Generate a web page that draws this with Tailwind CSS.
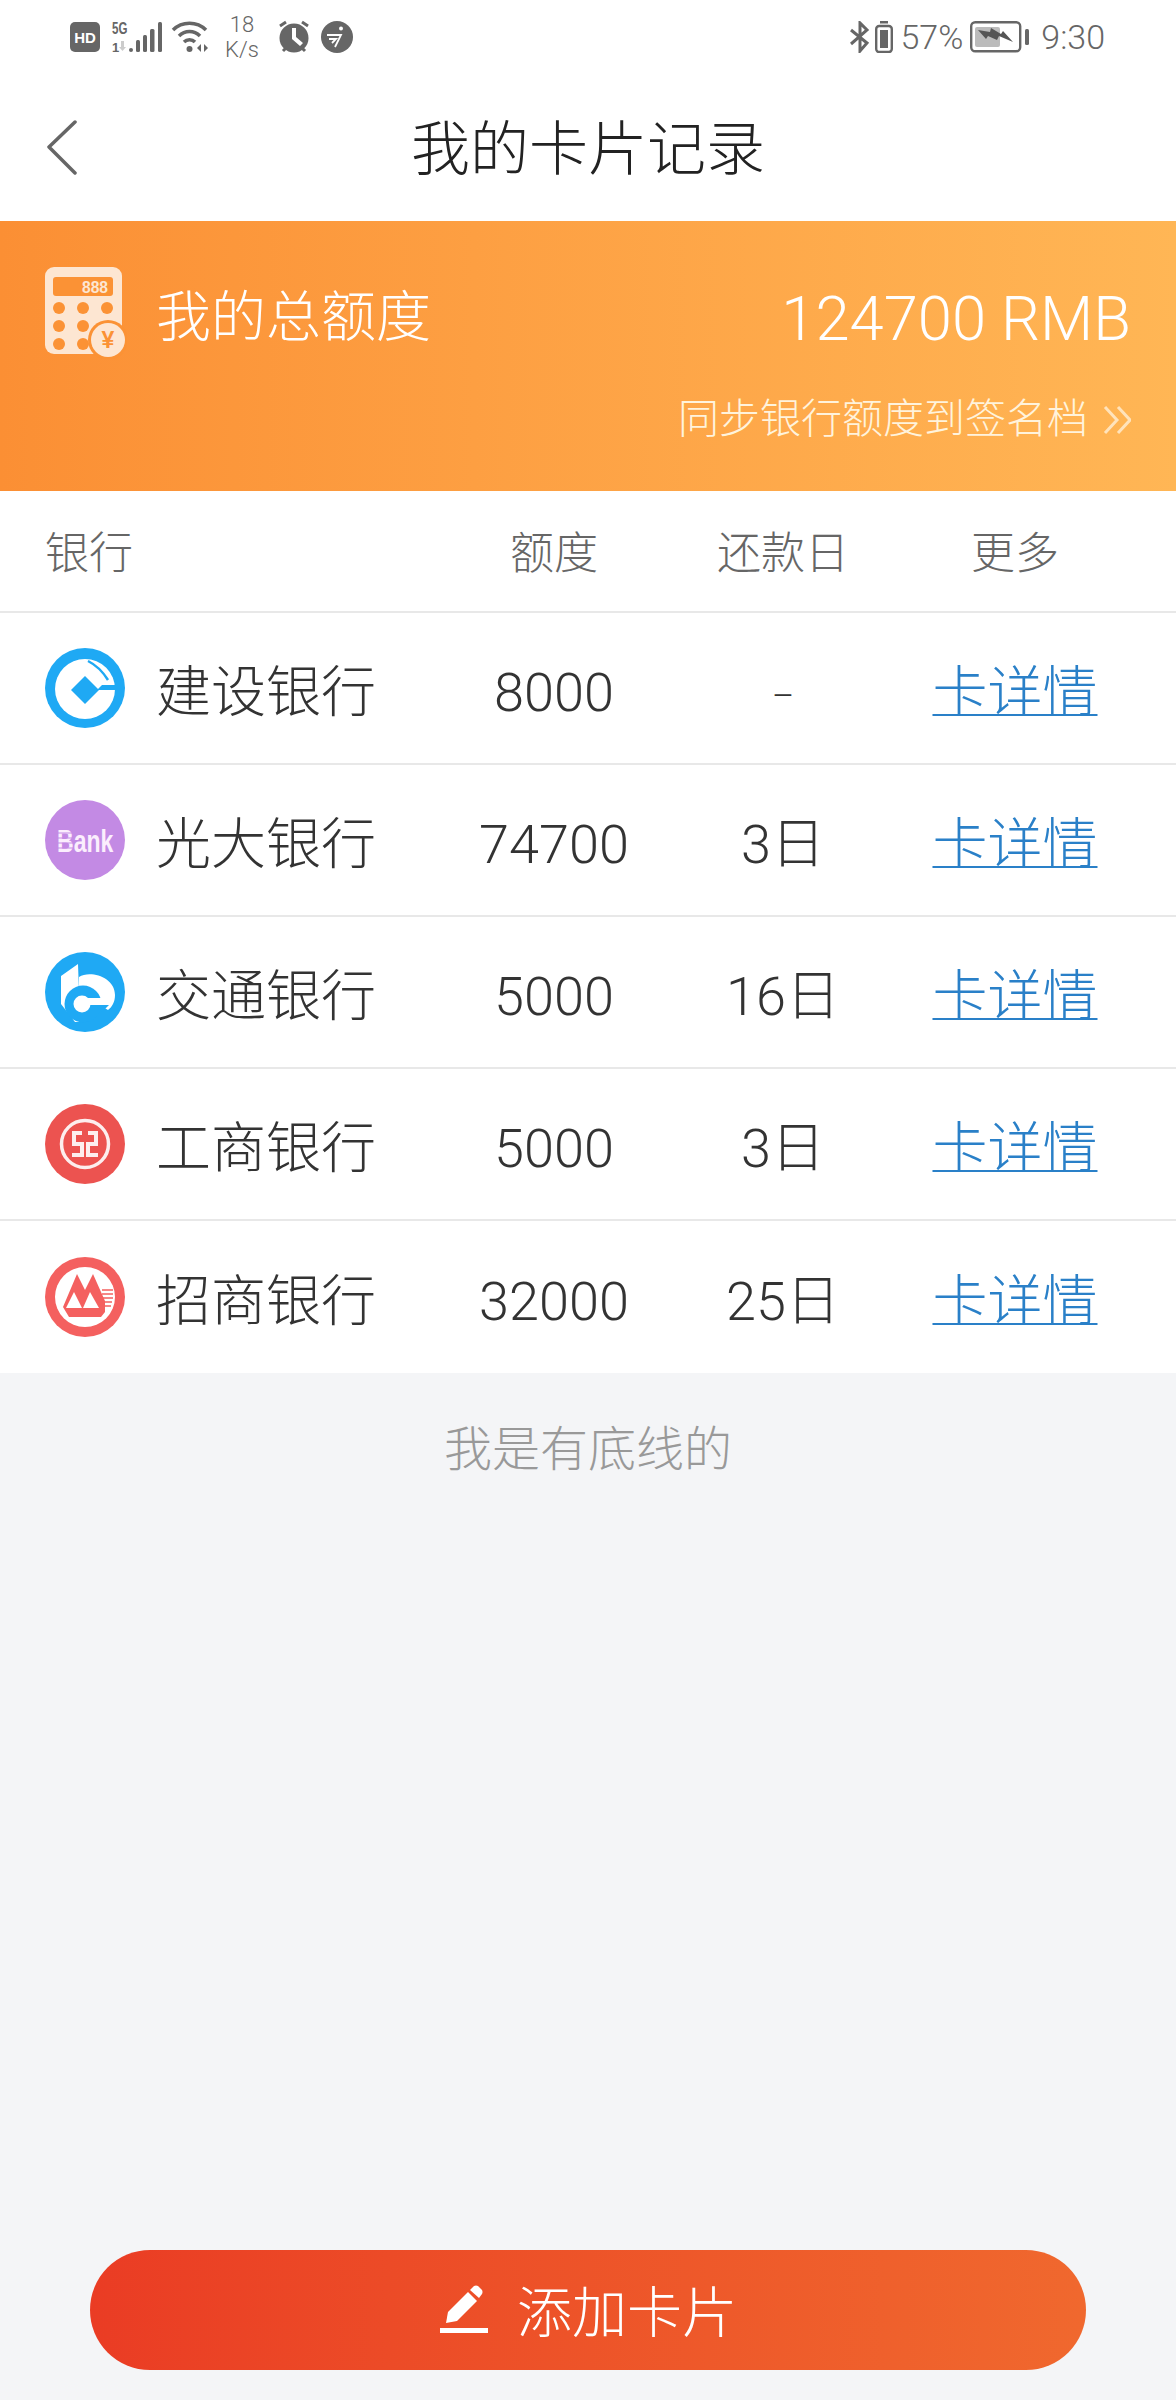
<!DOCTYPE html>
<html lang="zh-CN">
<head>
    <meta charset="UTF-8">
    <meta name="viewport" content="width=device-width, initial-scale=1.0">
    <title>我的卡片记录</title>
    <script src="https://cdn.jsdelivr.net/npm/@tailwindcss/browser@4"></script>
</head>
<body class="bg-[#f4f5f7] font-['Roboto','Noto_Sans_CJK_SC',sans-serif] font-light text-[#333333]">
    <div class="relative flex h-[2400px] w-[1176px] flex-col overflow-hidden">
        <!-- Status bar -->
        <div class="flex h-[74px] items-center justify-between bg-white pr-[71px] pl-[70px] text-[#666666]">
            <div class="flex items-center">
                <svg class="h-[30px] w-[30px]" viewBox="0 0 30 30"><rect width="30" height="30" rx="5" fill="#666"/><text x="15" y="21" text-anchor="middle" font-size="15" font-weight="700" fill="#fff" font-family="Liberation Sans">HD</text></svg>
                <svg class="ml-[11px] h-[38px] w-[51px]" viewBox="0 -3 51 38" fill="#666"><text transform="translate(1 13) scale(0.68 1)" font-size="17" font-weight="700" font-family="Liberation Sans">5G</text><text x="1" y="31" font-size="13" font-weight="700" font-family="Liberation Sans">1</text><path d="M10 20h3v6h2l-3.500 4-3.500-4h2z" fill="#ccc"/><rect x="18" y="27" width="4" height="4" rx="2"/><rect x="25" y="19" width="4" height="12" rx="1.500"/><rect x="32" y="14" width="4" height="17" rx="1.500"/><rect x="39" y="8" width="4.500" height="23" rx="1.500"/><rect x="47" y="1" width="4" height="30" rx="1.500"/></svg>
                <svg class="ml-[9px] h-[32px] w-[38px]" viewBox="0 0 38 32" fill="none" stroke="#666" stroke-width="3.500"><path d="M2 9C11 0 26 0 35 9"/><path d="M8 15c6-6 15-6 21 0"/><path d="M13 21c3-3 8-3 11 0"/><circle cx="18.500" cy="28" r="3" fill="#666" stroke="none"/><path d="M30 23l-4 4 4 4zM33 23l4 4-4 4z" fill="#666" stroke="none"/></svg>
                <div class="ml-[14px] w-[38px] text-center text-[22px] leading-[25px] font-light">18<br>K/s</div>
                <svg class="ml-[16px] h-[34px] w-[34px]" viewBox="0 0 34 34"><circle cx="17" cy="18" r="14.500" fill="#666"/><path d="M3 6l6-4M31 6l-6-4M6 31l3-3M28 31l-3-3" stroke="#666" stroke-width="3" fill="none"/><path d="M15 8v11l8 7 3-3-7-6V8z" fill="#fff"/></svg>
                <svg class="ml-[10px] h-[32px] w-[32px]" viewBox="0 0 32 32"><circle cx="16" cy="16" r="16" fill="#666"/><circle cx="20" cy="7.500" r="2" fill="#fff"/><path d="M6 14h14l-6 12M8 18h7l-4 4" fill="none" stroke="#fff" stroke-width="1.800"/></svg>
            </div>
            <div class="flex items-center">
                <svg class="h-[32px] w-[20px]" viewBox="0 0 20 32" fill="none" stroke="#666" stroke-width="3"><path d="M1 9l16 13-7 8V2l7 7L1 23"/></svg>
                <svg class="ml-[5px] h-[32px] w-[18px]" viewBox="0 0 18 32"><rect x="5" y="0" width="8" height="2.500" fill="#666"/><rect x="1.200" y="5" width="15.600" height="26" rx="3" fill="none" stroke="#666" stroke-width="2.400"/><rect x="5" y="9" width="8" height="18" fill="#666"/></svg>
                <span class="ml-[7px] text-[34px] leading-none font-light">57%</span>
                <svg class="ml-[7px] h-[32px] w-[60px]" viewBox="0 0 60 32"><rect x="1.200" y="1.200" width="49" height="29" rx="4" fill="none" stroke="#666" stroke-width="2.400"/><rect x="5" y="6" width="25" height="20" rx="2" fill="#bbb"/><path d="M8 9L20 11L21 7L31 13L33 10L43 21L29 15L27 19L18 15L16 18Z" fill="#555"/><rect x="55" y="8" width="4" height="16" rx="1.500" fill="#666"/></svg>
                <span class="ml-[11px] text-[34px] leading-none font-light">9:30</span>
            </div>
        </div>

        <!-- Nav -->
        <div class="relative flex h-[147px] items-center justify-center bg-white">
            <svg class="absolute top-[46px] left-[46px] h-[56px] w-[32px]" viewBox="0 0 32 56" fill="none" stroke="#666666" stroke-width="3.500" stroke-linecap="round" stroke-linejoin="round"><path d="M29 2L3 27l26 26"/></svg>
            <h1 class="pt-[3px] text-[59px] leading-none font-light text-[#222222]">我的卡片记录</h1>
        </div>

        <!-- Total banner -->
        <div class="flex h-[270px] flex-col bg-gradient-to-r from-[#fb8f34] to-[#ffb655] pt-[46px] pr-[45px] pl-[45px] text-white">
            <div class="flex items-start justify-between">
                <div class="flex items-start">
                    <svg class="h-[92px] w-[82px]" viewBox="0 0 82 92">
                        <rect x="0" y="0" width="77" height="87" rx="9" fill="#fde6d2"/>
                        <rect x="8" y="10" width="60" height="19" rx="3" fill="#fb9235"/>
                        <text x="37" y="26" font-size="17" font-weight="700" fill="#fde6d2" font-family="Liberation Sans" textLength="26" lengthAdjust="spacingAndGlyphs">888</text>
                        <g fill="#fb9235"><circle cx="14" cy="41" r="6"/><circle cx="38" cy="41" r="6"/><circle cx="62" cy="41" r="6"/><circle cx="14" cy="59" r="6"/><circle cx="38" cy="59" r="6"/><circle cx="14" cy="77" r="6"/><circle cx="38" cy="77" r="6"/></g>
                        <circle cx="63" cy="73" r="20" fill="#fb9235"/><circle cx="63" cy="73" r="17" fill="#fde6d2"/>
                        <text x="63" y="81" text-anchor="middle" font-size="23" font-weight="700" fill="#fb9235" font-family="Liberation Sans">¥</text>
                    </svg>
                    <span class="mt-[23px] ml-[29px] text-[55px] leading-none">我的总额度</span>
                </div>
                <span class="mt-[22px] text-[61.500px] leading-none">124700 RMB</span>
            </div>
            <div class="mt-[40px] flex items-center justify-end text-[#fff3dc]">
                <span class="text-[41px] leading-none">同步银行额度到签名档</span>
                <svg class="ml-[15px] h-[32px] w-[28px]" viewBox="0 0 28 32" fill="none" stroke="#ffe3bb" stroke-width="3"><path d="M2 3l12 13L2 29M15 3l12 13-12 13"/></svg>
            </div>
        </div>

        <!-- Table -->
        <div class="grid h-[122px] grid-cols-[394px_230px_228px_236px] items-center border-b-2 border-[#e8e8e8] bg-white pt-[5px] pl-[45px] text-[44px] text-[#666666]">
            <span>银行</span><span class="text-center">额度</span><span class="text-center">还款日</span><span class="text-center">更多</span>
        </div>

        <div class="grid h-[152px] grid-cols-[394px_230px_228px_236px] items-center border-b-2 border-[#e8e8e8] bg-white pl-[45px] text-[54px] [&_span]:pt-[8px]">
            <div class="flex items-center">
                <svg class="h-[80px] w-[80px]" viewBox="0 0 80 80"><circle cx="40" cy="40" r="40" fill="#1fa9f4"/><circle cx="40" cy="41" r="30" fill="#fff"/><path d="M40 28l14 14-14 14-14-14z" fill="#1fa9f4"/><path d="M52 42l5-5h16v5z" fill="#1fa9f4"/><path d="M43 13c8 4 15 11 20 19" fill="none" stroke="#1fa9f4" stroke-width="2.500"/></svg>
                <span class="ml-[31px] text-[55px]">建设银行</span>
            </div>
            <span class="text-center">8000</span><span class="translate-y-[3px] text-center text-[34px]">–</span>
            <a href="#" class="pt-[8px] text-center text-[55px] text-[#2a80c8] underline decoration-[2px] underline-offset-[3px]">卡详情</a>
        </div>
        <div class="grid h-[152px] grid-cols-[394px_230px_228px_236px] items-center border-b-2 border-[#e8e8e8] bg-white pl-[45px] text-[54px] [&_span]:pt-[8px]">
            <div class="flex items-center">
                <svg class="h-[80px] w-[80px]" viewBox="0 0 80 80"><circle cx="40" cy="40" r="40" fill="#c38ae4"/><text transform="translate(12 52) scale(0.72 1)" font-size="32" font-weight="700" fill="#fbeefd" font-family="Liberation Sans">Bank</text><path d="M12 33h16M12 38h16M12 43h16M12 48h16" stroke="#c38ae4" stroke-width="1"/></svg>
                <span class="ml-[31px] text-[55px]">光大银行</span>
            </div>
            <span class="text-center">74700</span><span class="text-center">3日</span>
            <a href="#" class="pt-[8px] text-center text-[55px] text-[#2a80c8] underline decoration-[2px] underline-offset-[3px]">卡详情</a>
        </div>
        <div class="grid h-[152px] grid-cols-[394px_230px_228px_236px] items-center border-b-2 border-[#e8e8e8] bg-white pl-[45px] text-[54px] [&_span]:pt-[8px]">
            <div class="flex items-center">
                <svg class="h-[80px] w-[80px]" viewBox="0 0 80 80"><circle cx="40" cy="40" r="40" fill="#1fa9f4"/><path d="M33 12L16 24V52L30 70L34 70L34 25C45 18 70 25 70 43C70 50 67 55 63 58L50 50L34 40Z" fill="#fff"/><circle cx="38" cy="52" r="18.500" fill="#1fa9f4"/><circle cx="37" cy="52" r="8.500" fill="#fff"/><path d="M37 46h21v7H37z" fill="#fff"/><path d="M50 53h14l-7 7z" fill="#1fa9f4"/></svg>
                <span class="ml-[31px] text-[55px]">交通银行</span>
            </div>
            <span class="text-center">5000</span><span class="text-center">16日</span>
            <a href="#" class="pt-[8px] text-center text-[55px] text-[#2a80c8] underline decoration-[2px] underline-offset-[3px]">卡详情</a>
        </div>
        <div class="grid h-[152px] grid-cols-[394px_230px_228px_236px] items-center border-b-2 border-[#e8e8e8] bg-white pl-[45px] text-[54px] [&_span]:pt-[8px]">
            <div class="flex items-center">
                <svg class="h-[80px] w-[80px]" viewBox="0 0 80 80"><circle cx="40" cy="40" r="40" fill="#ec5350"/><circle cx="40" cy="40" r="23.500" fill="none" stroke="#fdeeee" stroke-width="3.500"/><path d="M37 29H29V40H37V51H27M43 29H51V40H43V51H53" fill="none" stroke="#fdeeee" stroke-width="4"/></svg>
                <span class="ml-[31px] text-[55px]">工商银行</span>
            </div>
            <span class="text-center">5000</span><span class="text-center">3日</span>
            <a href="#" class="pt-[8px] text-center text-[55px] text-[#2a80c8] underline decoration-[2px] underline-offset-[3px]">卡详情</a>
        </div>
        <div class="grid h-[152px] grid-cols-[394px_230px_228px_236px] items-center bg-white pl-[45px] text-[54px] [&_span]:pt-[8px]">
            <div class="flex items-center">
                <svg class="h-[80px] w-[80px]" viewBox="0 0 80 80"><circle cx="40" cy="40" r="40" fill="#f4605f"/><circle cx="40" cy="40" r="30" fill="#fff"/><path d="M18 50L32 17L40 33L48 17L60 44V55L56 60H24Z" fill="#f4605f"/><path d="M29 35L37 51H21ZM45 35L54 51H38Z" fill="#fff"/><path d="M57 33h11M57 37h11M57 41h11M57 45h10M57 49h9" stroke="#f4605f" stroke-width="1.500"/></svg>
                <span class="ml-[31px] text-[55px]">招商银行</span>
            </div>
            <span class="text-center">32000</span><span class="text-center">25日</span>
            <a href="#" class="pt-[8px] text-center text-[55px] text-[#2a80c8] underline decoration-[2px] underline-offset-[3px]">卡详情</a>
        </div>

        <p class="mt-[53px] text-center text-[48px] leading-none text-[#999999]">我是有底线的</p>

        <!-- Add card -->
        <button class="mx-[90px] mt-auto mb-[30px] flex h-[120px] items-center justify-center rounded-full bg-gradient-to-r from-[#ea3c24] to-[#f0682e] text-[55px] text-white">
            <svg class="h-[50px] w-[50px]" viewBox="0 0 50 50" fill="#fff"><path d="M7 38L9 27L29 7L38 16L18 36Z"/><path d="M31 5L35 1Q37 0 39 1L43 5Q44 7 43 9L40 13Z"/><rect x="1" y="43" width="48" height="5"/></svg>
            <span class="ml-[28px] pt-[6px]">添加卡片</span>
        </button>
    </div>
</body>
</html>
